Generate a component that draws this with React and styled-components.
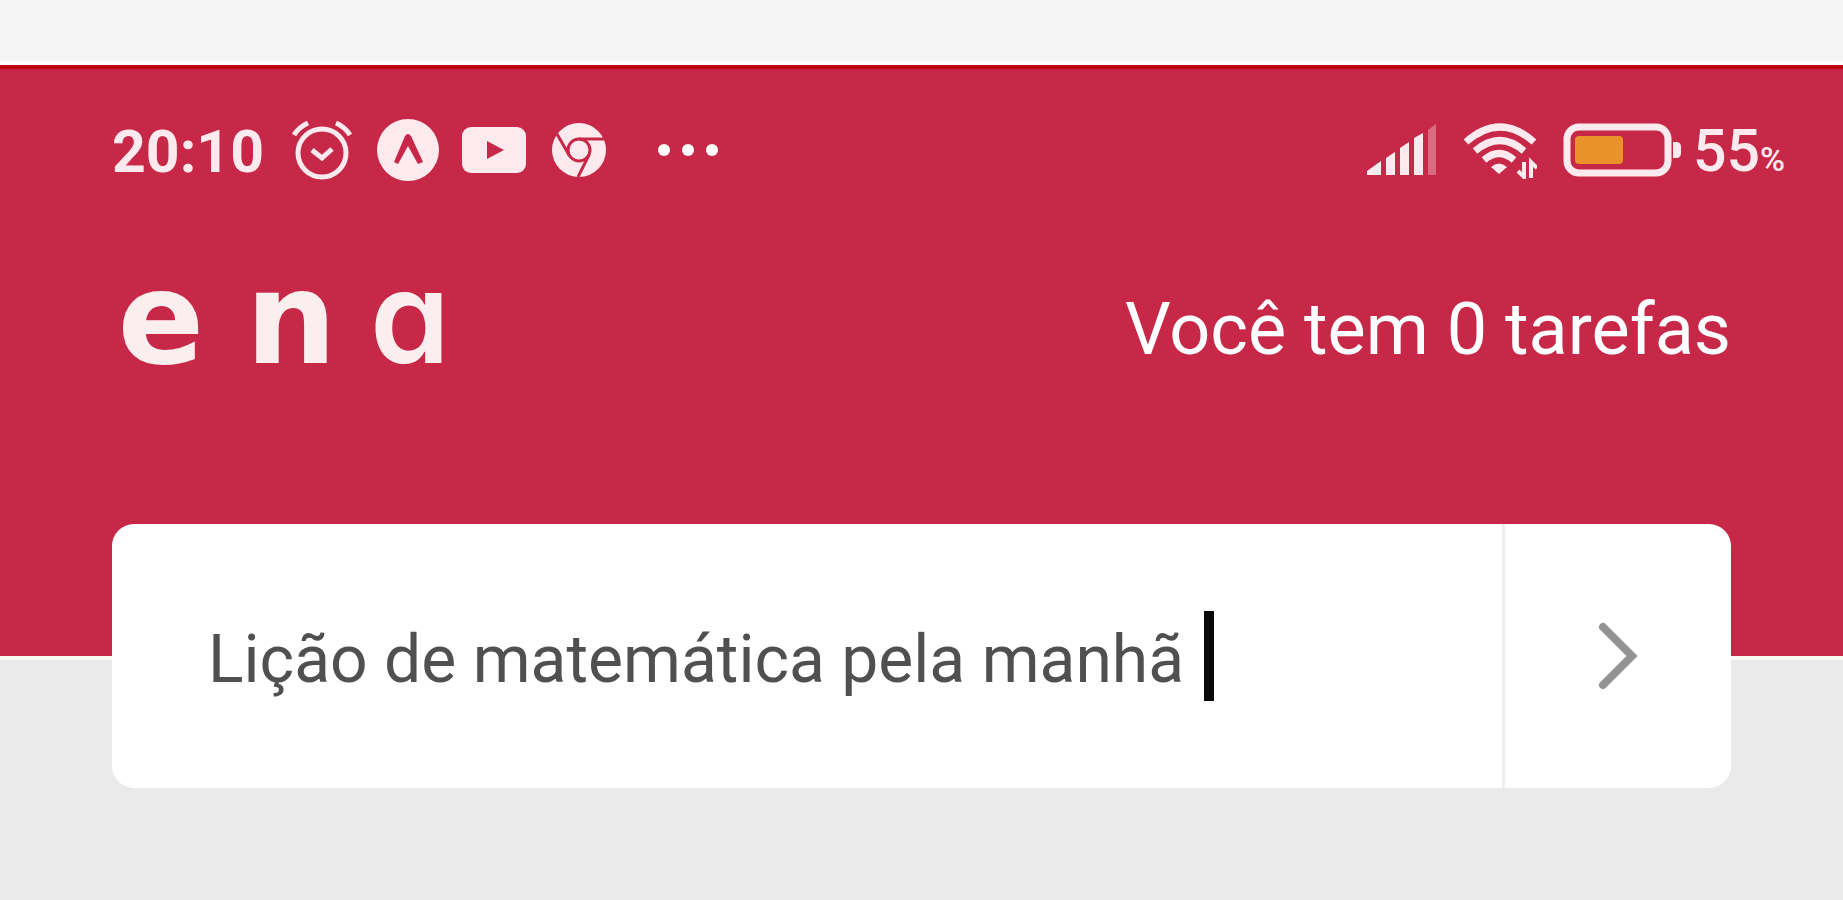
import React, { useState } from 'react';
import styled, { createGlobalStyle } from 'styled-components';

const GlobalStyle = createGlobalStyle`
  * {
    box-sizing: border-box;
  }

  body {
    margin: 0;
    background: #eaeaea;
    font-family: Roboto, sans-serif;
  }
`;

const AlarmIcon = () => (
  <svg width="64" height="64" viewBox="0 0 64 64" fill="none" stroke="#fdeaef" strokeLinecap="round">
    <circle cx="32" cy="35" r="24" strokeWidth="5" />
    <path d="M4 17Q9 9 18 5M60 17Q55 9 46 5" strokeWidth="5" strokeLinecap="butt" />
    <path d="M22 32 32 40 42 31" strokeWidth="5" strokeLinecap="butt" />
  </svg>
);

const ExpoIcon = () => (
  <svg width="64" height="64" viewBox="0 0 64 64">
    <circle cx="32" cy="32" r="31" fill="#fdeaef" />
    <path d="M18 44 29 18Q32 14 35 18L47 44 42 46 32 28 22 46Z" fill="#c72848" />
  </svg>
);

const YoutubeIcon = () => (
  <svg width="64" height="46" viewBox="0 0 64 46">
    <rect width="64" height="46" rx="9" fill="#fdeaef" />
    <path d="M25 14 42 23 25 32Z" fill="#c72848" />
  </svg>
);

const ChromeIcon = () => (
  <svg width="58" height="54" viewBox="-4 0 58 54" fill="none" stroke="#c72848" strokeWidth="3">
    <circle cx="27" cy="27" r="27" fill="#fdeaef" stroke="none" />
    <circle cx="27" cy="27" r="11" />
    <path d="M27 16H52M5 11 17 32M37 32 26 54" />
  </svg>
);

const DotsIcon = () => (
  <svg width="60" height="12" viewBox="0 0 60 12" fill="#fff">
    <circle cx="6" cy="6" r="6" />
    <circle cx="30" cy="6" r="6" />
    <circle cx="54" cy="6" r="6" />
  </svg>
);

const SignalIcon = () => (
  <svg width="70" height="52" viewBox="0 0 70 52" fill="#fdeaef">
    <path d="M0 51V47L14 37V51Z" />
    <path d="M19 51V34L28 28V51Z" />
    <path d="M33 51V24L42 18V51Z" />
    <path d="M47 51V14L56 9V51Z" />
    <path d="M61 51V6L69 0V51Z" opacity="0.35" />
  </svg>
);

const WifiIcon = () => (
  <svg width="74" height="58" viewBox="0 0 74 58" fill="none" stroke="#fdeaef" strokeWidth="7">
    <path d="M3 21Q37-9 71 21" />
    <path d="M12 30Q37 9 61 30" />
    <path d="M21 39Q36 26 51 39" />
    <path d="M28 46Q36 39 44 46L36 53Z" fill="#fdeaef" stroke="none" />
    <path d="M61 41V56L55 50M68 57V41L74 47" strokeWidth="4" />
  </svg>
);

const BatteryIcon = () => (
  <svg width="118" height="54" viewBox="0 0 118 54">
    <rect x="4" y="4" width="101" height="46" rx="12" fill="none" stroke="#fdeaef" strokeWidth="7" />
    <rect x="12" y="13" width="48" height="28" rx="4" fill="#e9912b" />
    <path d="M110 19H113Q118 19 118 24V30Q118 35 113 35H110Z" fill="#fdeaef" />
  </svg>
);

const ChevronIcon = () => (
  <svg width="40" height="68" viewBox="0 0 40 68" fill="none" stroke="#939393" strokeWidth="8" strokeLinecap="round">
    <path d="M5 5 34 34 5 63" />
  </svg>
);

export default function App() {
  const [task, setTask] = useState('Lição de matemática pela manhã ');

  return (
    <>
      <GlobalStyle />
      <TopStrip />
      <Header>
        <StatusBar>
          <StatusGroup>
            <Clock>20:10</Clock>
            <AppIcons>
              <AlarmIcon />
              <ExpoIcon />
              <YoutubeIcon />
              <ChromeIcon />
            </AppIcons>
            <More>
              <DotsIcon />
            </More>
          </StatusGroup>
          <StatusGroup>
            <SignalIcon />
            <WifiIcon />
            <Battery>
              <BatteryIcon />
              <Percent>
                55<small>%</small>
              </Percent>
            </Battery>
          </StatusGroup>
        </StatusBar>
        <BrandRow>
          <Logo>
            <LogoBold>e</LogoBold>
            <LogoBold>n</LogoBold>
            <span>a</span>
          </Logo>
          <Summary>Você tem 0 tarefas</Summary>
        </BrandRow>
      </Header>
      <TaskForm onSubmit={(e) => e.preventDefault()}>
        <Field>
          <TaskInput
            aria-label="Nova tarefa"
            value={task}
            onChange={(e) => setTask(e.target.value)}
          />
          <Caret />
        </Field>
        <SubmitButton type="submit" aria-label="Adicionar tarefa">
          <ChevronIcon />
        </SubmitButton>
      </TaskForm>
    </>
  );
}

const TopStrip = styled.div`
  height: 65px;
  background: #f5f5f5;
  border-bottom: 4px solid #fff;
`;

const Header = styled.header`
  padding: 49px 112px 282px;
  background: #c72848;
  border-top: 4px solid #be0514;
  border-bottom: 4px solid #f8f8f4;
`;

const StatusBar = styled.div`
  display: flex;
  align-items: center;
  justify-content: space-between;
  height: 64px;
  margin-right: -54px;
`;

const StatusGroup = styled.div`
  display: flex;
  align-items: center;
  gap: 26px;

  svg {
    display: block;
    flex: none;
  }
`;

const Clock = styled.time`
  padding-top: 4px;
  color: #fdeaef;
  font-size: 59px;
  font-weight: 700;
  line-height: 64px;
`;

const AppIcons = styled.div`
  display: flex;
  align-items: center;
  gap: 22px;
`;

const More = styled.div`
  padding-left: 26px;
`;

const Battery = styled.div`
  display: flex;
  align-items: center;
  gap: 12px;
`;

const Percent = styled.span`
  display: flex;
  align-items: baseline;
  padding-top: 2px;
  color: #fdeaef;
  font-size: 59px;
  font-weight: 500;
  line-height: 64px;

  small {
    font-size: 34px;
    line-height: 40px;
  }
`;

const BrandRow = styled.div`
  display: flex;
  align-items: center;
  justify-content: space-between;
  height: 112px;
  margin-top: 80px;
`;

const Logo = styled.h1`
  display: grid;
  grid-template-columns: 98px 162px 76px;
  justify-items: center;
  align-items: baseline;
  margin: 0;
  color: #fbeeee;
  font-family: Inter, sans-serif;
  font-size: 128px;
  font-weight: 600;
  line-height: 112px;
  font-feature-settings: 'cv11';
`;

const LogoBold = styled.span`
  font-family: 'DejaVu Sans', sans-serif;
  font-weight: 700;
`;

const Summary = styled.p`
  margin: 0;
  padding-top: 24px;
  color: #fff;
  font-size: 72px;
  line-height: 84px;
`;

const TaskForm = styled.form`
  position: relative;
  display: flex;
  height: 264px;
  margin: -136px 112px 0;
  background: #fff;
  border-radius: 22px;
`;

const Field = styled.div`
  display: flex;
  flex: 1;
  align-items: center;
  min-width: 0;
  padding-left: 96px;
`;

const TaskInput = styled.input`
  min-width: 0;
  padding: 8px 4px 0 0;
  border: 0;
  outline: none;
  background: none;
  color: #505050;
  font-family: inherit;
  font-size: 66px;
  line-height: 80px;
  field-sizing: content;
`;

const Caret = styled.span`
  flex: none;
  width: 10px;
  height: 90px;
  background: #0a0a0a;
`;

const SubmitButton = styled.button`
  display: flex;
  align-items: center;
  justify-content: center;
  width: 229px;
  padding: 0;
  border: 0;
  border-left: 3px solid #ededed;
  background: none;
  cursor: pointer;
`;
